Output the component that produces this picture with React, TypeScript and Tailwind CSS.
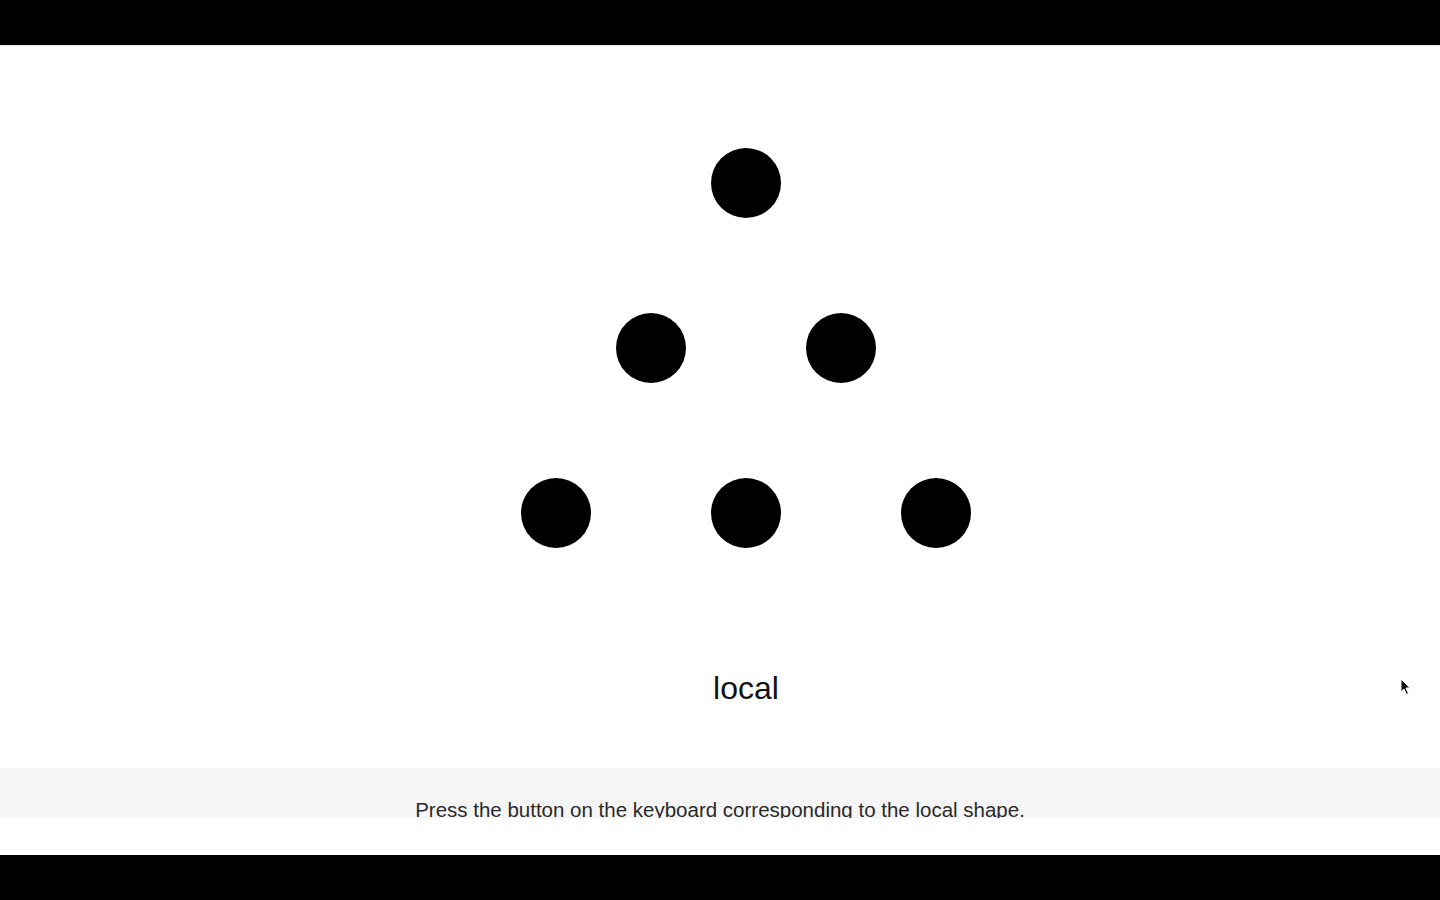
export default function App() {
  const dot = "w-[70px] h-[70px] rounded-full bg-black shrink-0"

  return (
    <div className="relative flex flex-col h-[900px] w-full bg-white font-['Liberation_Sans',Arial,sans-serif]">
      {/* letterbox top */}
      <div className="h-[45px] bg-black shrink-0" />

      {/* stimulus */}
      <div className="h-[723px] shrink-0 border-t border-[#e6e6e6] flex flex-col items-center pl-[52px] pt-[102px]">
        <div className="flex flex-col items-center gap-[95px]">
          <div className="flex gap-[120px]">
            <div className={dot} />
          </div>
          <div className="flex gap-[120px]">
            <div className={dot} />
            <div className={dot} />
          </div>
          <div className="flex gap-[120px]">
            <div className={dot} />
            <div className={dot} />
            <div className={dot} />
          </div>
        </div>
        <p className="mt-[124px] text-[32px] leading-[32px] text-[#111]">local</p>
      </div>

      {/* instruction band */}
      <div className="h-[50px] shrink-0 bg-[#f5f5f5] overflow-hidden pt-[32px] text-center">
        <p className="text-[20.5px] leading-[20px] text-[#2a2a2a]">
          Press the button on the keyboard corresponding to the local shape.
        </p>
      </div>

      <div className="h-[37px] shrink-0 bg-white" />

      {/* letterbox bottom */}
      <div className="h-[45px] shrink-0 bg-black" />

      {/* mouse cursor */}
      <svg
        className="absolute left-[1400px] top-[678px]"
        width="12"
        height="18"
        viewBox="0 0 12 18"
      >
        <path d="M1 1 L1 14 L4 11 L6.5 16.5 L8.5 15.5 L6 10 L10 10 Z" fill="#111" stroke="#fff" strokeWidth="1" />
      </svg>
    </div>
  )
}
